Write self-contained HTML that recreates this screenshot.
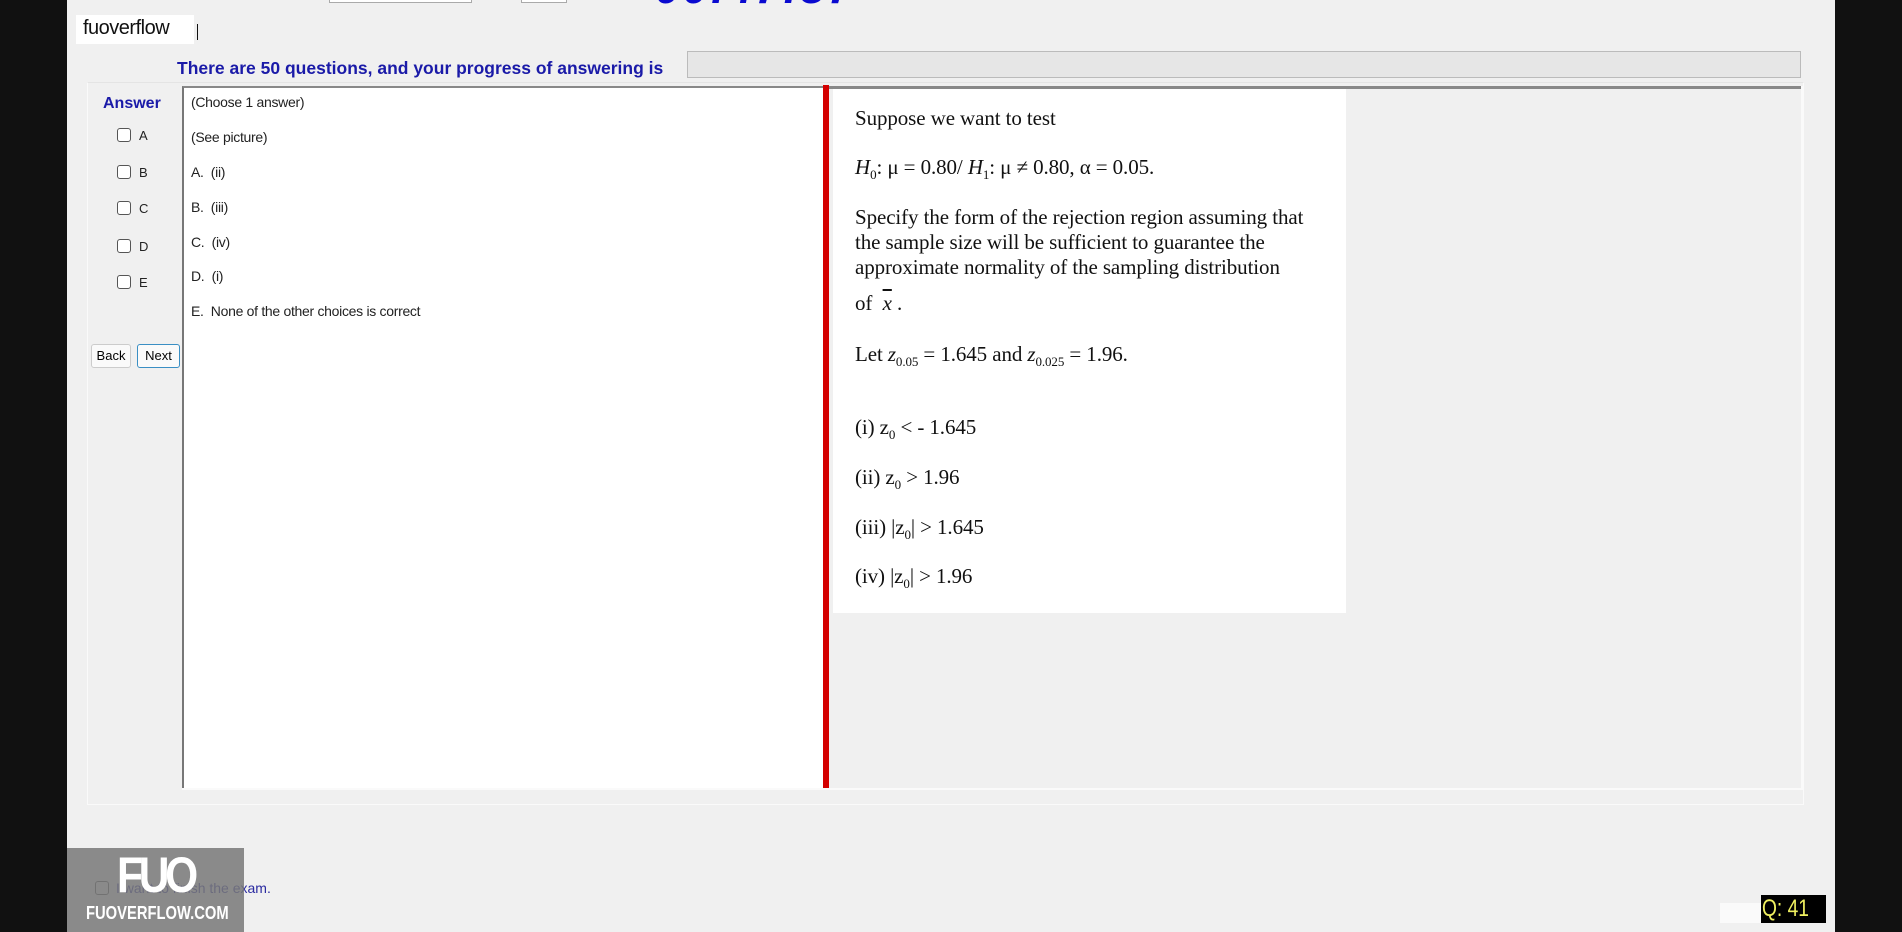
<!DOCTYPE html>
<html><head><meta charset="utf-8"><style>
*{margin:0;padding:0;box-sizing:border-box}
html{overflow:hidden;width:1902px;height:932px}
body{width:1902px;height:932px;background:#f0f0f0;position:relative;overflow:hidden;font-family:"Liberation Sans",Arial,sans-serif}
.a{position:absolute}
.cb{position:absolute;width:14px;height:14px;border:1px solid #555;border-radius:3px;background:#fff}
.lt{position:absolute;left:191px;font-size:14px;color:#222;letter-spacing:-0.3px}
.cl{position:absolute;left:139px;font-size:13px;color:#222}
.sf{position:absolute;left:855px;font-family:"Liberation Serif",serif;font-size:21px;color:#111;white-space:nowrap;letter-spacing:-0.1px}
sub{font-size:13px}
</style></head><body>
<div class="a" style="left:0;top:0;width:67px;height:932px;background:#111"></div>
<div class="a" style="left:1835px;top:0;width:67px;height:932px;background:#111"></div>
<div class="a" style="left:329px;top:-8px;width:143px;height:11px;border:1px solid #aaa;background:#fff"></div>
<div class="a" style="left:521px;top:-8px;width:46px;height:11px;border:1px solid #aaa;background:#fff"></div>
<div class="a" style="left:655px;top:-40px;font-size:46px;font-weight:bold;font-style:italic;color:#0a0ad0;letter-spacing:2px;white-space:nowrap">00:47:57</div>
<div class="a" style="left:76px;top:15px;width:118px;height:29px;background:#fff"></div>
<div class="a" style="left:83px;top:17px;font-size:20px;color:#111;letter-spacing:-0.5px">fuoverflow</div>
<div class="a" style="left:197px;top:24px;width:1px;height:16px;background:#111"></div>
<div class="a" style="left:87px;top:82px;width:1717px;height:723px;border:1px solid #fafafa;border-top-color:#e4e4e4"></div>
<div class="a" style="left:177px;top:58px;font-size:17.5px;font-weight:bold;color:#1a1aa8;white-space:nowrap">There are 50 questions, and your progress of answering is</div>
<div class="a" style="left:687px;top:51px;width:1114px;height:27px;border:1px solid #bbb;background:#e6e6e6"></div>
<div class="a" style="left:103px;top:95px;font-size:16px;font-weight:bold;color:#1a1aa8">Answer</div>
<div class="cb" style="left:117px;top:128px"></div><div class="cl" style="top:128px">A</div>
<div class="cb" style="left:117px;top:165px"></div><div class="cl" style="top:165px">B</div>
<div class="cb" style="left:117px;top:201px"></div><div class="cl" style="top:201px">C</div>
<div class="cb" style="left:117px;top:239px"></div><div class="cl" style="top:239px">D</div>
<div class="cb" style="left:117px;top:275px"></div><div class="cl" style="top:275px">E</div>
<div class="a" style="left:91px;top:344px;width:40px;height:24px;border:1px solid #ccc;border-radius:3px;background:#fafafa;font-size:13px;text-align:center;line-height:22px">Back</div>
<div class="a" style="left:137px;top:344px;width:43px;height:24px;border:1px solid #3a8fc4;border-radius:3px;background:#fafafa;font-size:13px;text-align:center;line-height:22px">Next</div>
<div class="a" style="left:182px;top:86px;width:642px;height:702px;background:#fff;border-left:2px solid #777;border-top:2px solid #888"></div>
<div class="lt" style="top:94px">(Choose 1 answer)</div>
<div class="lt" style="top:129px">(See picture)</div>
<div class="lt" style="top:164px">A.&nbsp; (ii)</div>
<div class="lt" style="top:199px">B.&nbsp; (iii)</div>
<div class="lt" style="top:234px">C.&nbsp; (iv)</div>
<div class="lt" style="top:268px">D.&nbsp; (i)</div>
<div class="lt" style="top:303px">E.&nbsp; None of the other choices is correct</div>
<div class="a" style="left:823px;top:85px;width:6px;height:705px;background:#d40000"></div>
<div class="a" style="left:829px;top:86px;width:972px;height:3px;background:#888"></div>
<div class="a" style="left:1801px;top:86px;width:2px;height:704px;background:#fafafa"></div>
<div class="a" style="left:182px;top:788px;width:1620px;height:2px;background:#fafafa"></div>
<div class="a" style="left:833px;top:89px;width:513px;height:524px;background:#fff"></div>
<div class="sf" style="top:106px">Suppose we want to test</div>
<div class="sf" style="top:155px"><i>H</i><sub>0</sub>: μ = 0.80/ <i>H</i><sub>1</sub>: μ ≠ 0.80, α = 0.05.</div>
<div class="sf" style="top:205px;line-height:25px">Specify the form of the rejection region assuming that<br>the sample size will be sufficient to guarantee the<br>approximate normality of the sampling distribution</div>
<div class="sf" style="top:291px">of &nbsp;<span style="text-decoration:overline;font-style:italic">x</span> .</div>
<div class="sf" style="top:342px">Let <i>z</i><sub>0.05</sub> = 1.645 and <i>z</i><sub>0.025</sub> = 1.96.</div>
<div class="sf" style="top:415px">(i) z<sub>0</sub> &lt; - 1.645</div>
<div class="sf" style="top:465px">(ii) z<sub>0</sub> &gt; 1.96</div>
<div class="sf" style="top:515px">(iii) |z<sub>0</sub>| &gt; 1.645</div>
<div class="sf" style="top:564px">(iv) |z<sub>0</sub>| &gt; 1.96</div>
<div class="cb" style="left:95px;top:881px;background:#eee"></div>
<div class="a" style="left:116px;top:880px;font-size:14px;color:#2a2aa0;white-space:nowrap">I want to finish the exam.</div>
<div class="a" style="left:67px;top:848px;width:177px;height:84px;background:rgba(120,120,120,0.85)"></div>
<div class="a" style="left:117px;top:846px;font-size:50px;font-weight:bold;color:#fff;letter-spacing:-5px;transform:scaleX(0.85);transform-origin:left">FUO</div>
<div class="a" style="left:86px;top:903px;font-size:18px;font-weight:bold;color:#fff;transform:scaleX(0.82);transform-origin:left;white-space:nowrap">FUOVERFLOW.COM</div>
<div class="a" style="left:1720px;top:903px;width:41px;height:20px;background:#fafafa"></div>
<div class="a" style="left:1761px;top:895px;width:65px;height:28px;background:#000"></div>
<div class="a" style="left:1762px;top:894px;color:#f0f060;font-size:24px;line-height:30px;white-space:nowrap;transform:scaleX(0.8);transform-origin:left">Q: 41</div>
</body></html>
